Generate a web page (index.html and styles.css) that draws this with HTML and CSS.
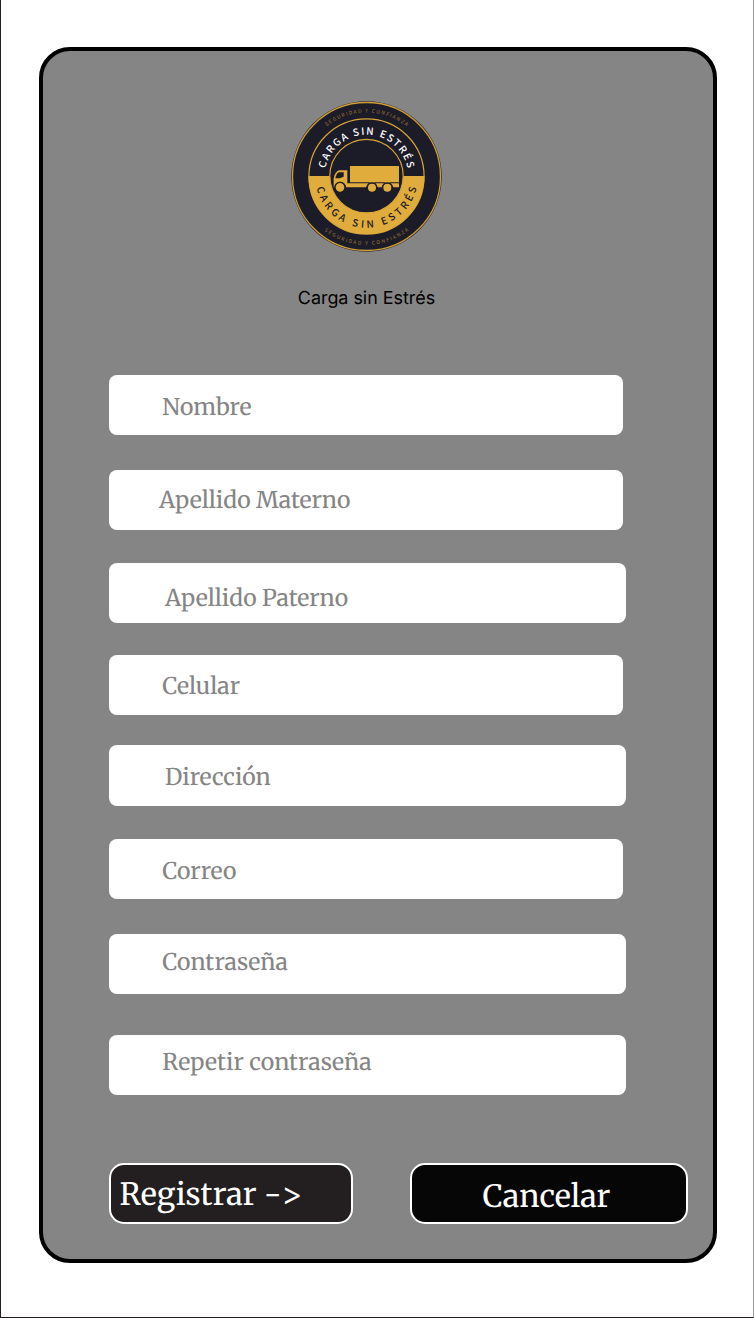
FILE: index.html
```html
<!DOCTYPE html>
<html lang="es">
<head>
<meta charset="utf-8">
<title>Carga sin Estrés</title>
<link rel="stylesheet" href="styles.css">
</head>
<body>
<main class="card">
  <header class="brand">
    <svg class="logo" viewBox="-75.5 -76.5 152 152" role="img" aria-label="Carga sin Estrés">
      <defs>
        <path id="outerTop" d="M-64 0A64 64 0 0 1 64 0"/>
        <path id="outerBottom" d="M-68.5 0A68.5 68.5 0 0 0 68.5 0"/>
        <path id="innerTop" d="M-41.8 0A41.8 41.8 0 1 1 41.8 0"/>
        <path id="innerBottom" d="M-51.3 0A51.3 51.3 0 0 0 51.3 0"/>
      </defs>
      <circle r="75.2" fill="#1c1b28"/>
      <circle r="74" fill="none" stroke="#cf9d35" stroke-width="1.3"/>
      <circle r="57.6" fill="#1c1b28" stroke="#d8a538" stroke-width="1.2"/>
      <path d="M-58-.4H58A58 58 0 0 1-58-.4Z" fill="#e0ac3b"/>
      <circle r="36.7" cy="-.4" fill="#1c1b28" stroke="#d8a538" stroke-width="1.2"/>
      <text class="motto"><textPath href="#outerTop" startOffset="50%" textLength="86">SEGURIDAD Y CONFIANZA</textPath></text>
      <text class="motto"><textPath href="#outerBottom" startOffset="50%" textLength="91">SEGURIDAD Y CONFIANZA</textPath></text>
      <text class="ring light"><textPath href="#innerTop" startOffset="50%" textLength="115">CARGA SIN ESTRÉS</textPath></text>
      <text class="ring dark"><textPath href="#innerBottom" startOffset="50%" textLength="138">CARGA SIN ESTRÉS</textPath></text>
      <g transform="scale(.33333) translate(-244.5 -244.5)" fill="#e0ac3b">
        <path d="M195 213H342V262H195Z"/>
        <path d="M146 276V250Q150 230 162 226H187V265H342V277H325Q320 262 307 262Q294 262 290 277H278Q274 262 261 262Q248 262 243 277H184Q180 260 165 260Q150 260 148 280Z"/>
        <path d="M151 250Q154 236 161 232H176V245L164 250Z" fill="#1c1b28"/>
        <g stroke="#1c1b28" stroke-width="4">
          <circle cx="165" cy="277" r="15"/>
          <circle cx="261" cy="278" r="14"/>
          <circle cx="307" cy="278" r="14"/>
        </g>
      </g>
    </svg>
    <h1 class="title">Carga sin Estrés</h1>
  </header>
  <form class="form">
    <label class="field nombre"><span>Nombre</span></label>
    <label class="field materno"><span>Apellido Materno</span></label>
    <label class="field paterno wide"><span>Apellido Paterno</span></label>
    <label class="field celular"><span>Celular</span></label>
    <label class="field direccion wide"><span>Dirección</span></label>
    <label class="field correo"><span>Correo</span></label>
    <label class="field contrasena wide"><span>Contraseña</span></label>
    <label class="field repetir wide"><span>Repetir contraseña</span></label>
    <div class="actions">
      <button class="btn register" type="button">Registrar -&gt;</button>
      <button class="btn cancel" type="button">Cancelar</button>
    </div>
  </form>
</main>
</body>
</html>
```
FILE: styles.css
```css
* { box-sizing: border-box; }
body {
  margin: 0;
  height: 1318px;
  padding: 47px 36.5px 0 37.5px;
  background: #fff;
  border: solid #231f20;
  border-width: 0 1px 1px;
  border-right-color: #999;
  text-rendering: geometricPrecision;
}
.card {
  height: 1216px;
  padding: 49px 0 0 66px;
  background: #858585;
  border: 4px solid #000;
  border-radius: 31px;
}
.brand {
  display: flex;
  flex-direction: column;
  align-items: center;
  width: 516px;
  height: 275px;
}
.logo { width: 152px; height: 152px; }
.title {
  margin: 35px 0 0;
  font: 400 17.9px/24px Inter, sans-serif;
  color: #000;
}
.motto, .ring {
  font-family: "Noto Sans CJK SC", "Noto Sans", sans-serif;
  text-anchor: middle;
}
.motto { font-size: 5px; fill: #a07a30; }
.ring { font-size: 10px; font-weight: 500; }
.light { fill: #fff; }
.dark { fill: #1c1b28; }
.form { display: flex; flex-direction: column; }
.field {
  display: block;
  width: 514px;
  height: 60px;
  padding-left: 53.8px;
  background: #fff;
  border-radius: 8px;
  font: 23px/30px Merriweather, "DejaVu Serif Condensed", "DejaVu Serif", serif;
  color: #858585;
  white-space: nowrap;
}
.wide { width: 517px; }
.nombre { padding-top: 18.4px; }
.materno { margin-top: 35px; padding: 16px 0 0 50.5px; }
.paterno { margin-top: 33px; padding: 21px 0 0 56.5px; }
.celular { margin-top: 32px; padding-top: 17px; }
.direccion { height: 61px; margin-top: 30px; padding: 18px 0 0 56.5px; }
.correo { margin-top: 33px; padding-top: 18px; }
.contrasena { margin-top: 35px; padding-top: 14px; }
.repetir { margin-top: 41px; padding-top: 13px; }
.actions { display: flex; gap: 57px; margin-top: 68px; }
.btn {
  height: 61px;
  border: 2px solid #fff;
  border-radius: 15px;
  color: #fff;
  font: 30.7px/40px Merriweather, "DejaVu Serif Condensed", "DejaVu Serif", serif;
  white-space: nowrap;
  text-rendering: geometricPrecision;
}
.register {
  width: 244px;
  padding: 3px 0 0 9px;
  background: #231f20;
  text-align: left;
}
.cancel {
  width: 278px;
  padding: 6px 0 0 71px;
  background: #060606;
  text-align: left;
}
```
